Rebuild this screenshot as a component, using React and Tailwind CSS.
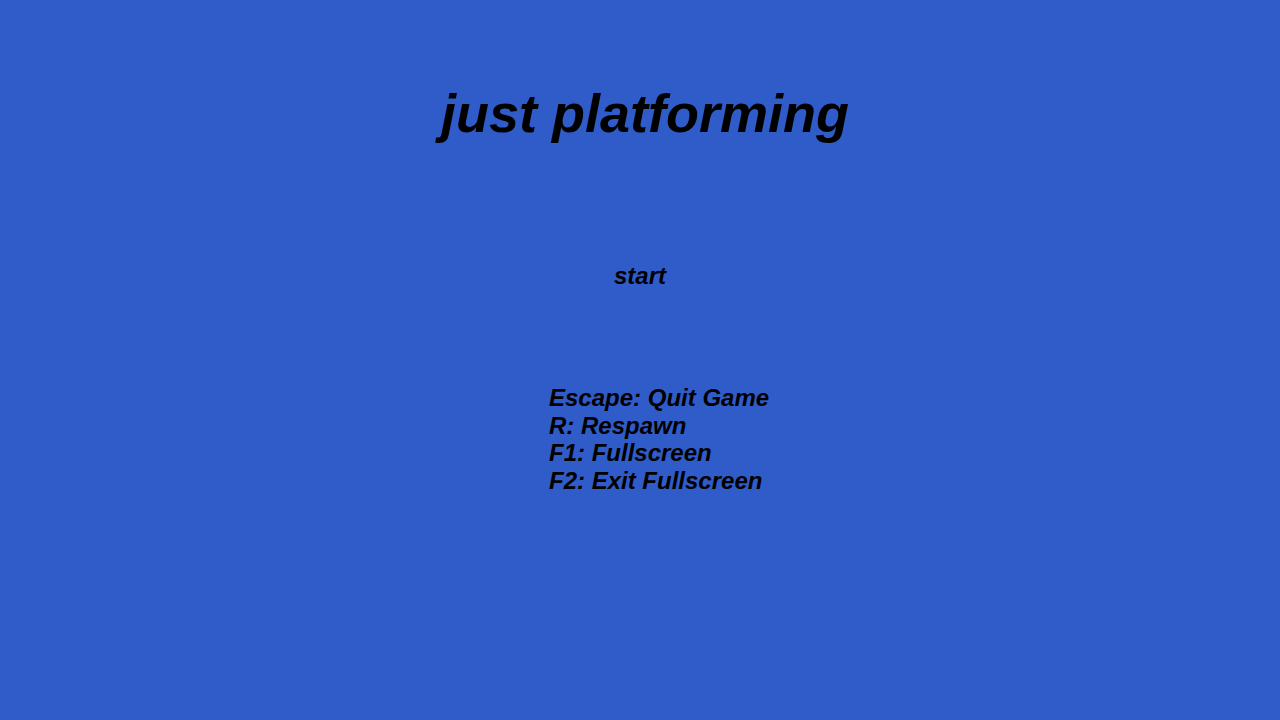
export default function App() {
  return (
    <div className="w-[1280px] h-[720px] bg-[#305cc9] text-black font-['Liberation_Sans',Arial,sans-serif] font-bold italic overflow-hidden flex flex-col">
      {/* title */}
      <h1 className="pt-[82px] pl-[10px] text-center text-[54px] leading-[62px]">just platforming</h1>

      {/* menu entry */}
      <div className="mt-[118px] text-center text-[24px] leading-[27px]">start</div>

      {/* controls */}
      <div className="mt-[95px] pl-[549px] text-[24px] leading-[27.6px]">
        <div>Escape: Quit Game</div>
        <div>R: Respawn</div>
        <div>F1: Fullscreen</div>
        <div>F2: Exit Fullscreen</div>
      </div>
    </div>
  )
}
